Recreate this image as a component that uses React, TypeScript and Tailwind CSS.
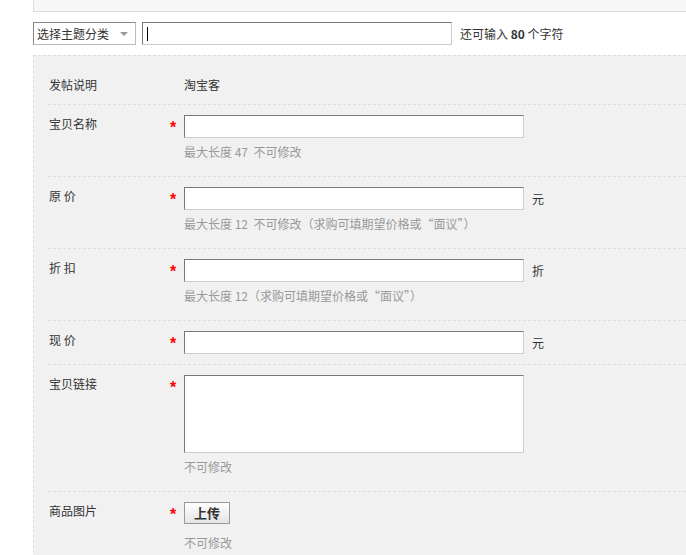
import React from "react";

const font = { fontFamily: '"Noto Sans CJK SC", "Microsoft YaHei", sans-serif' };

type Row = {
  label: string;
  kind: "text" | "input" | "textarea" | "upload";
  value?: string;
  unit?: string;
  hint?: string;
  required?: boolean;
};

const rows: Row[] = [
  { label: "发帖说明", kind: "text", value: "淘宝客" },
  { label: "宝贝名称", kind: "input", required: true, hint: "最大长度 47  不可修改" },
  { label: "原 价", kind: "input", required: true, unit: "元", hint: "最大长度 12  不可修改（求购可填期望价格或“面议”）" },
  { label: "折 扣", kind: "input", required: true, unit: "折", hint: "最大长度 12（求购可填期望价格或“面议”）" },
  { label: "现 价", kind: "input", required: true, unit: "元" },
  { label: "宝贝链接", kind: "textarea", required: true, hint: "不可修改" },
  { label: "商品图片", kind: "upload", required: true, hint: "不可修改" },
];

function Field({ row }: { row: Row }) {
  if (row.kind === "text") {
    return <span className="leading-[18px] text-[#333]">{row.value}</span>;
  }
  if (row.kind === "upload") {
    return (
      <button className="h-[22px] w-[46px] border border-[#999] bg-gradient-to-b from-white to-[#e4e4e4] text-[13px] font-bold leading-[20px] text-[#333]">
        上传
      </button>
    );
  }
  if (row.kind === "textarea") {
    return (
      <textarea
        className="block h-[78px] w-[340px] resize-none border border-t-[#777] border-l-[#777] border-r-[#ccc] border-b-[#ccc] bg-white outline-none"
        readOnly
      />
    );
  }
  return (
    <div className="flex items-center">
      <input
        className="block h-[23px] w-[340px] border border-t-[#777] border-l-[#777] border-r-[#ccc] border-b-[#ccc] bg-white outline-none"
        readOnly
      />
      {row.unit && <span className="ml-[8px] leading-[18px] text-[#333]">{row.unit}</span>}
    </div>
  );
}

export default function App() {
  return (
    <div className="h-[555px] w-full overflow-hidden bg-white text-[12px] text-[#333]" style={font}>
      {/* top strip */}
      <div className="ml-[33px] h-[12px] border-b border-l border-[#ddd] bg-[#f7f7f7]" />

      {/* subject line */}
      <div className="ml-[33px] mt-[10px] flex items-center">
        <div className="flex h-[23px] w-[103px] items-center justify-between border border-t-[#888] border-l-[#888] border-r-[#bbb] border-b-[#bbb] bg-white pl-[3px] pr-[7px]">
          <span className="leading-[18px]">选择主题分类</span>
          <span className="h-0 w-0 border-x-[4px] border-t-[4px] border-x-transparent border-t-[#999]" />
        </div>
        <div className="ml-[6px] flex h-[23px] w-[310px] items-center border border-t-[#777] border-l-[#777] border-r-[#ccc] border-b-[#ccc] bg-white pl-[4px]">
          <span className="h-[14px] w-px bg-black" />
        </div>
        <span className="ml-[8px] leading-[18px]">
          还可输入 <b>80</b> 个字符
        </span>
      </div>

      {/* form panel */}
      <div className="ml-[33px] mt-[10px] border-l border-t border-dashed border-[#ddd] bg-[#f1f1f1] pl-[14px]">
        {rows.map((row, i) => (
          <div
            key={row.label}
            className={`flex border-b border-dashed border-[#ddd] ${i === 0 ? "pb-[10px] pt-[20px]" : row.hint ? "pb-[15px] pt-[10px]" : "pb-[10px] pt-[10px]"}`}
          >
            <div className="w-[121px] pl-[1px] leading-[18px] text-[#333]">{row.label}</div>
            <div className="w-[15px] pl-[1px] pt-[4px] font-['Liberation_Sans',sans-serif] text-[16px] font-bold leading-[18px] text-[#f00]">
              {row.required ? "*" : ""}
            </div>
            <div className="flex flex-col">
              <Field row={row} />
              {row.hint && (
                <div className={`whitespace-pre leading-[18px] text-[#999] ${row.kind === "upload" ? "mt-[10px]" : "mt-[5px]"}`}>
                  {row.hint}
                </div>
              )}
            </div>
          </div>
        ))}
      </div>
    </div>
  );
}
